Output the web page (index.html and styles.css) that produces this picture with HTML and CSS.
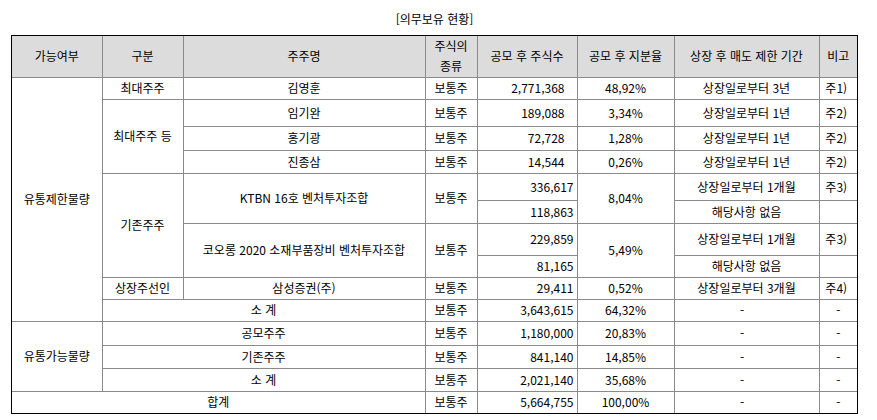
FILE: index.html
```html
<!DOCTYPE html>
<html lang="ko">
<head>
<meta charset="utf-8">
<title>의무보유 현황</title>
<link rel="stylesheet" href="styles.css">
</head>
<body>
<div class="page">
  <div class="title">[의무보유 현황]</div>
  <div class="frame">
    <table class="grid">
      <colgroup>
        <col class="c1"><col class="c2"><col class="c3"><col class="c4"><col class="c5"><col class="c6"><col class="c7"><col class="c8">
      </colgroup>
      <thead>
        <tr class="h-head">
          <th>가능여부</th>
          <th>구분</th>
          <th>주주명</th>
          <th class="two">주식의<br>종류</th>
          <th>공모 후 주식수</th>
          <th>공모 후 지분율</th>
          <th>상장 후 매도 제한 기간</th>
          <th>비고</th>
        </tr>
      </thead>
      <tbody>
        <tr class="h22">
          <td rowspan="10">유통제한물량</td>
          <td>최대주주</td>
          <td>김영훈</td>
          <td>보통주</td>
          <td class="num wide">2,771,368</td>
          <td>48,92%</td>
          <td>상장일로부터 3년</td>
          <td class="note">주1)</td>
        </tr>
        <tr class="h27">
          <td rowspan="3">최대주주 등</td>
          <td>임기완</td>
          <td>보통주</td>
          <td class="num wide">189,088</td>
          <td>3,34%</td>
          <td>상장일로부터 1년</td>
          <td class="note">주2)</td>
        </tr>
        <tr class="h24">
          <td>홍기광</td>
          <td>보통주</td>
          <td class="num wide">72,728</td>
          <td>1,28%</td>
          <td>상장일로부터 1년</td>
          <td class="note">주2)</td>
        </tr>
        <tr class="h23">
          <td>진종삼</td>
          <td>보통주</td>
          <td class="num wide">14,544</td>
          <td>0,26%</td>
          <td>상장일로부터 1년</td>
          <td class="note">주2)</td>
        </tr>
        <tr class="h27">
          <td rowspan="4">기존주주</td>
          <td rowspan="2">KTBN 16호 벤처투자조합</td>
          <td rowspan="2">보통주</td>
          <td class="num">336,617</td>
          <td rowspan="2">8,04%</td>
          <td>상장일로부터 1개월</td>
          <td class="note">주3)</td>
        </tr>
        <tr class="h23">
          <td class="num">118,863</td>
          <td>해당사항 없음</td>
          <td></td>
        </tr>
        <tr class="h32">
          <td rowspan="2">코오롱 2020 소재부품장비 벤처투자조합</td>
          <td rowspan="2">보통주</td>
          <td class="num">229,859</td>
          <td rowspan="2">5,49%</td>
          <td>상장일로부터 1개월</td>
          <td class="note">주3)</td>
        </tr>
        <tr class="h22">
          <td class="num">81,165</td>
          <td>해당사항 없음</td>
          <td></td>
        </tr>
        <tr class="h22">
          <td>상장주선인</td>
          <td>삼성증권(주)</td>
          <td>보통주</td>
          <td class="num">29,411</td>
          <td>0,52%</td>
          <td>상장일로부터 3개월</td>
          <td class="note">주4)</td>
        </tr>
        <tr class="h22">
          <td colspan="2">소 계</td>
          <td>보통주</td>
          <td class="num">3,643,615</td>
          <td>64,32%</td>
          <td class="dash">-</td>
          <td>-</td>
        </tr>
        <tr class="h24">
          <td rowspan="3">유통가능물량</td>
          <td colspan="2">공모주주</td>
          <td>보통주</td>
          <td class="num">1,180,000</td>
          <td>20,83%</td>
          <td class="dash">-</td>
          <td>-</td>
        </tr>
        <tr class="h23">
          <td colspan="2">기존주주</td>
          <td>보통주</td>
          <td class="num">841,140</td>
          <td>14,85%</td>
          <td class="dash">-</td>
          <td>-</td>
        </tr>
        <tr class="h23">
          <td colspan="2">소 계</td>
          <td>보통주</td>
          <td class="num">2,021,140</td>
          <td>35,68%</td>
          <td class="dash">-</td>
          <td>-</td>
        </tr>
        <tr class="h22">
          <td colspan="3">합계</td>
          <td>보통주</td>
          <td class="num">5,664,755</td>
          <td>100,00%</td>
          <td class="dash">-</td>
          <td>-</td>
        </tr>
      </tbody>
    </table>
  </div>
</div>
</body>
</html>
```

FILE: styles.css
```css
html, body {
  margin: 0;
  padding: 0;
  background: #ffffff;
}

body {
  font-family: "Noto Sans CJK KR", "Noto Sans", sans-serif;
  font-size: 12px;
  color: #000000;
}

.page {
  width: 847px;
  margin-left: 11px;
  padding-top: 11px;
}

.title {
  text-align: center;
  line-height: 16px;
  height: 16px;
  margin-bottom: 8px;
}

.frame {
  border: 1px solid #000000;
  width: 847px;
  box-sizing: border-box;
}

.grid {
  width: 845px;
  border-collapse: collapse;
  border-style: hidden;
  table-layout: fixed;
}

.c1 { width: 90px; }
.c2 { width: 81px; }
.c3 { width: 242px; }
.c4 { width: 52px; }
.c5 { width: 100px; }
.c6 { width: 97px; }
.c7 { width: 145px; }
.c8 { width: 38px; }

.grid th,
.grid td {
  border: 1px solid #8a8a8a;
  padding: 0 3px;
  text-align: center;
  vertical-align: middle;
  font-weight: normal;
  line-height: 16px;
  white-space: nowrap;
  overflow: hidden;
}

.grid th {
  background: #dcdcdc;
}

.grid th.two {
  line-height: 20px;
}

.h-head { height: 41px; }
.h22 { height: 22px; }
.h23 { height: 23px; }
.h24 { height: 24px; }
.h27 { height: 27px; }
.h32 { height: 32px; }

.grid td.num {
  text-align: right;
  padding-right: 3px;
}

.grid td.num.wide {
  padding-right: 12px;
}

.grid td.note {
  padding-right: 7px;
}

.grid td.dash {
  padding-right: 12px;
}
```
